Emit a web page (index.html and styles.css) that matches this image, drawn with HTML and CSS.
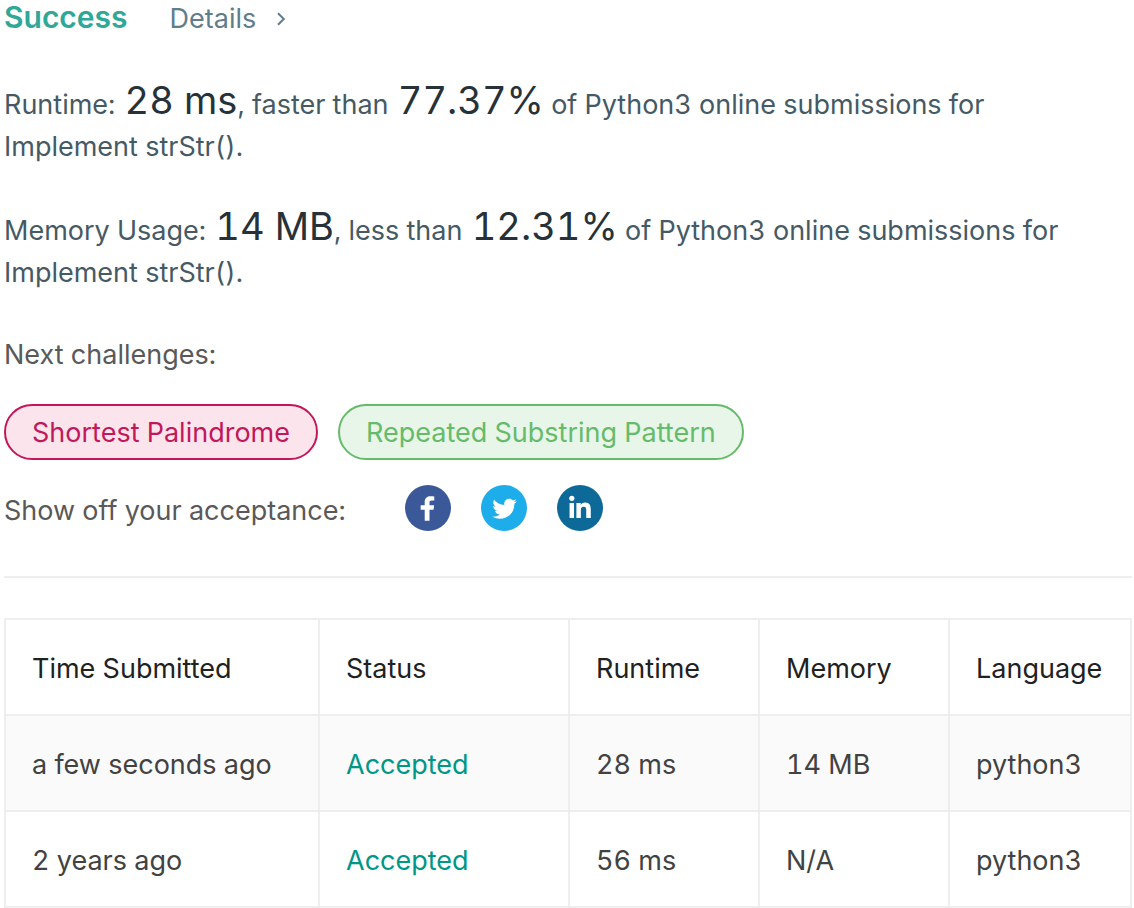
FILE: index.html
```html
<!DOCTYPE html>
<html lang="en">
<head>
<meta charset="utf-8">
<title>Submission result</title>
<link rel="stylesheet" href="styles.css">
</head>
<body>
<main class="result">
  <header class="result-head">
    <h1 class="verdict">Success</h1>
    <a class="details" href="#details">Details
      <svg class="chevron" viewBox="0 0 10 14" aria-hidden="true"><path d="M2 1.200 7.800 7 2 12.800"/></svg>
    </a>
  </header>
  <p class="stat">Runtime: <span class="figure">28 ms</span>, faster than <span class="figure">77.37%</span> of Python3 online submissions for Implement strStr().</p>
  <p class="stat">Memory Usage: <span class="figure">14 MB</span>, less than <span class="figure">12.31%</span> of Python3 online submissions for Implement strStr().</p>
  <h2 class="next-title">Next challenges:</h2>
  <nav class="challenges">
    <a class="pill pill-hard" href="#shortest-palindrome">Shortest Palindrome</a>
    <a class="pill pill-easy" href="#repeated-substring-pattern">Repeated Substring Pattern</a>
  </nav>
  <section class="share">
    <span class="share-label">Show off your acceptance:</span>
    <div class="share-links">
      <button class="share-button" type="button" aria-label="Share on Facebook">
        <svg viewBox="0 0 64 64"><circle cx="32" cy="32" r="32" fill="#3b5998"/><path fill="#fff" d="M34.100 50V33.300h5.600l.8-6.500h-6.400v-4.100c0-1.900.5-3.200 3.200-3.200h3.400v-5.800c-.6-.1-2.600-.3-5-.3-5 0-8.300 3-8.300 8.600v4.800h-5.600v6.500h5.600V50z" transform="translate(0 3.300) scale(1 .93)"/></svg>
      </button>
      <button class="share-button" type="button" aria-label="Share on Twitter">
        <svg viewBox="0 0 64 64"><circle cx="32" cy="32" r="32" fill="#1dadeb"/><path fill="#fff" d="M48 22.100c-1.200.5-2.400.9-3.800 1 1.400-.8 2.400-2.100 2.900-3.600-1.300.8-2.700 1.300-4.200 1.600C41.700 19.800 40 19 38.200 19c-3.600 0-6.600 2.900-6.600 6.600 0 .5.100 1 .2 1.500-5.500-.3-10.300-2.900-13.500-6.900-.6 1-.9 2.100-.9 3.300 0 2.300 1.200 4.300 2.900 5.500-1.100 0-2.100-.3-3-.8v.1c0 3.200 2.300 5.800 5.300 6.400-.6.1-1.100.2-1.700.2-.4 0-.8 0-1.200-.1.800 2.600 3.300 4.500 6.100 4.600-2.200 1.800-5.100 2.800-8.200 2.800-.5 0-1.100 0-1.600-.1 2.900 1.900 6.400 2.900 10.100 2.900 12.100 0 18.700-10 18.700-18.700v-.8c1.200-1 2.300-2.100 3.200-3.400z" transform="translate(-1.500 -1.100) scale(1.070)"/></svg>
      </button>
      <button class="share-button" type="button" aria-label="Share on LinkedIn">
        <svg viewBox="0 0 64 64"><circle cx="32" cy="32" r="32" fill="#0d6a98"/><g fill="#fff"><path d="M17.500 25h6.200v21h-6.200zM27 25h6v2.900h.1c.8-1.600 2.900-3.400 6-3.400 6.400 0 7.900 4.100 7.900 9.900V46h-6.300V35.600c0-2.400 0-5.500-3.600-5.500s-3.900 2.700-3.900 5.300V46H27z"/><circle cx="20.600" cy="18.600" r="3.600"/></g></svg>
      </button>
    </div>
  </section>
  <table class="submissions">
    <colgroup><col class="col-time"><col class="col-status"><col class="col-metric"><col class="col-metric"><col></colgroup>
    <thead>
      <tr><th scope="col">Time Submitted</th><th scope="col">Status</th><th scope="col">Runtime</th><th scope="col">Memory</th><th scope="col">Language</th></tr>
    </thead>
    <tbody>
      <tr><td>a few seconds ago</td><td><a class="status" href="#submission-2">Accepted</a></td><td>28 ms</td><td>14 MB</td><td>python3</td></tr>
      <tr><td>2 years ago</td><td><a class="status" href="#submission-1">Accepted</a></td><td>56 ms</td><td>N/A</td><td>python3</td></tr>
    </tbody>
  </table>
</main>
</body>
</html>
```
FILE: styles.css
```css
* {
  box-sizing: border-box;
}

body {
  margin: 0;
  background: #fff;
  color: #595959;
  font: 400 27px/42px Inter, "Liberation Sans", sans-serif;
  font-variant-numeric: tabular-nums;
}

a {
  text-decoration: none;
}

.result {
  padding: 0 2px 0 4px;
}

.result-head {
  display: flex;
  align-items: baseline;
  gap: 42px;
  height: 34px;
  line-height: 34px;
}

.verdict {
  margin: 0;
  color: #2fa898;
  font-size: 30px;
  font-weight: 600;
}

.details {
  display: flex;
  align-items: center;
  gap: 20px;
  color: #607d8b;
}

.chevron {
  width: 10px;
  height: 14px;
  fill: none;
  stroke: currentColor;
  stroke-width: 2;
}

.stat {
  margin: 0 0 42px;
  padding-right: 26px;
  color: #455a64;
}

.result-head + .stat {
  margin-top: 50px;
}

.figure {
  margin-left: 2px;
  color: #263238;
  font-size: 38px;
  line-height: 0;
}

.next-title {
  margin: 0 0 28px;
  font-size: 27px;
  font-weight: 400;
}

.stat + .next-title {
  margin-top: -2px;
}

.challenges {
  display: flex;
  flex-wrap: wrap;
  gap: 20px;
}

.pill {
  padding: 6px 26px 4px;
  border: 2px solid;
  border-radius: 28px;
}

.pill-hard {
  background: #fce4ec;
  border-color: #c2185b;
  color: #c2185b;
}

.pill-easy {
  background: #e8f5e9;
  border-color: #66bb6a;
  color: #66bb6a;
}

.share {
  display: flex;
  align-items: center;
  gap: 58px;
  padding: 24px 0 44px;
  border-bottom: 2px solid #eee;
}

.share-label {
  padding-top: 6px;
}

.share-links {
  display: flex;
  gap: 28px;
}

.share-button {
  width: 48px;
  height: 48px;
  padding: 1px;
  border: 0;
  background: none;
}

.share-button svg {
  display: block;
  width: 100%;
}

.submissions {
  width: 100%;
  margin-top: 40px;
  border-collapse: collapse;
  table-layout: fixed;
  color: #424242;
}

.submissions th,
.submissions td {
  padding: 28px 26px 24px;
  border: 2px solid #eee;
  font-weight: 400;
  text-align: left;
  white-space: nowrap;
}

.submissions th {
  color: #212121;
}

.submissions tbody tr:nth-child(odd) {
  background: #fafafa;
}

.col-time {
  width: 314px;
}

.col-status {
  width: 250px;
}

.col-metric {
  width: 190px;
}

.status {
  color: #009688;
}
```
